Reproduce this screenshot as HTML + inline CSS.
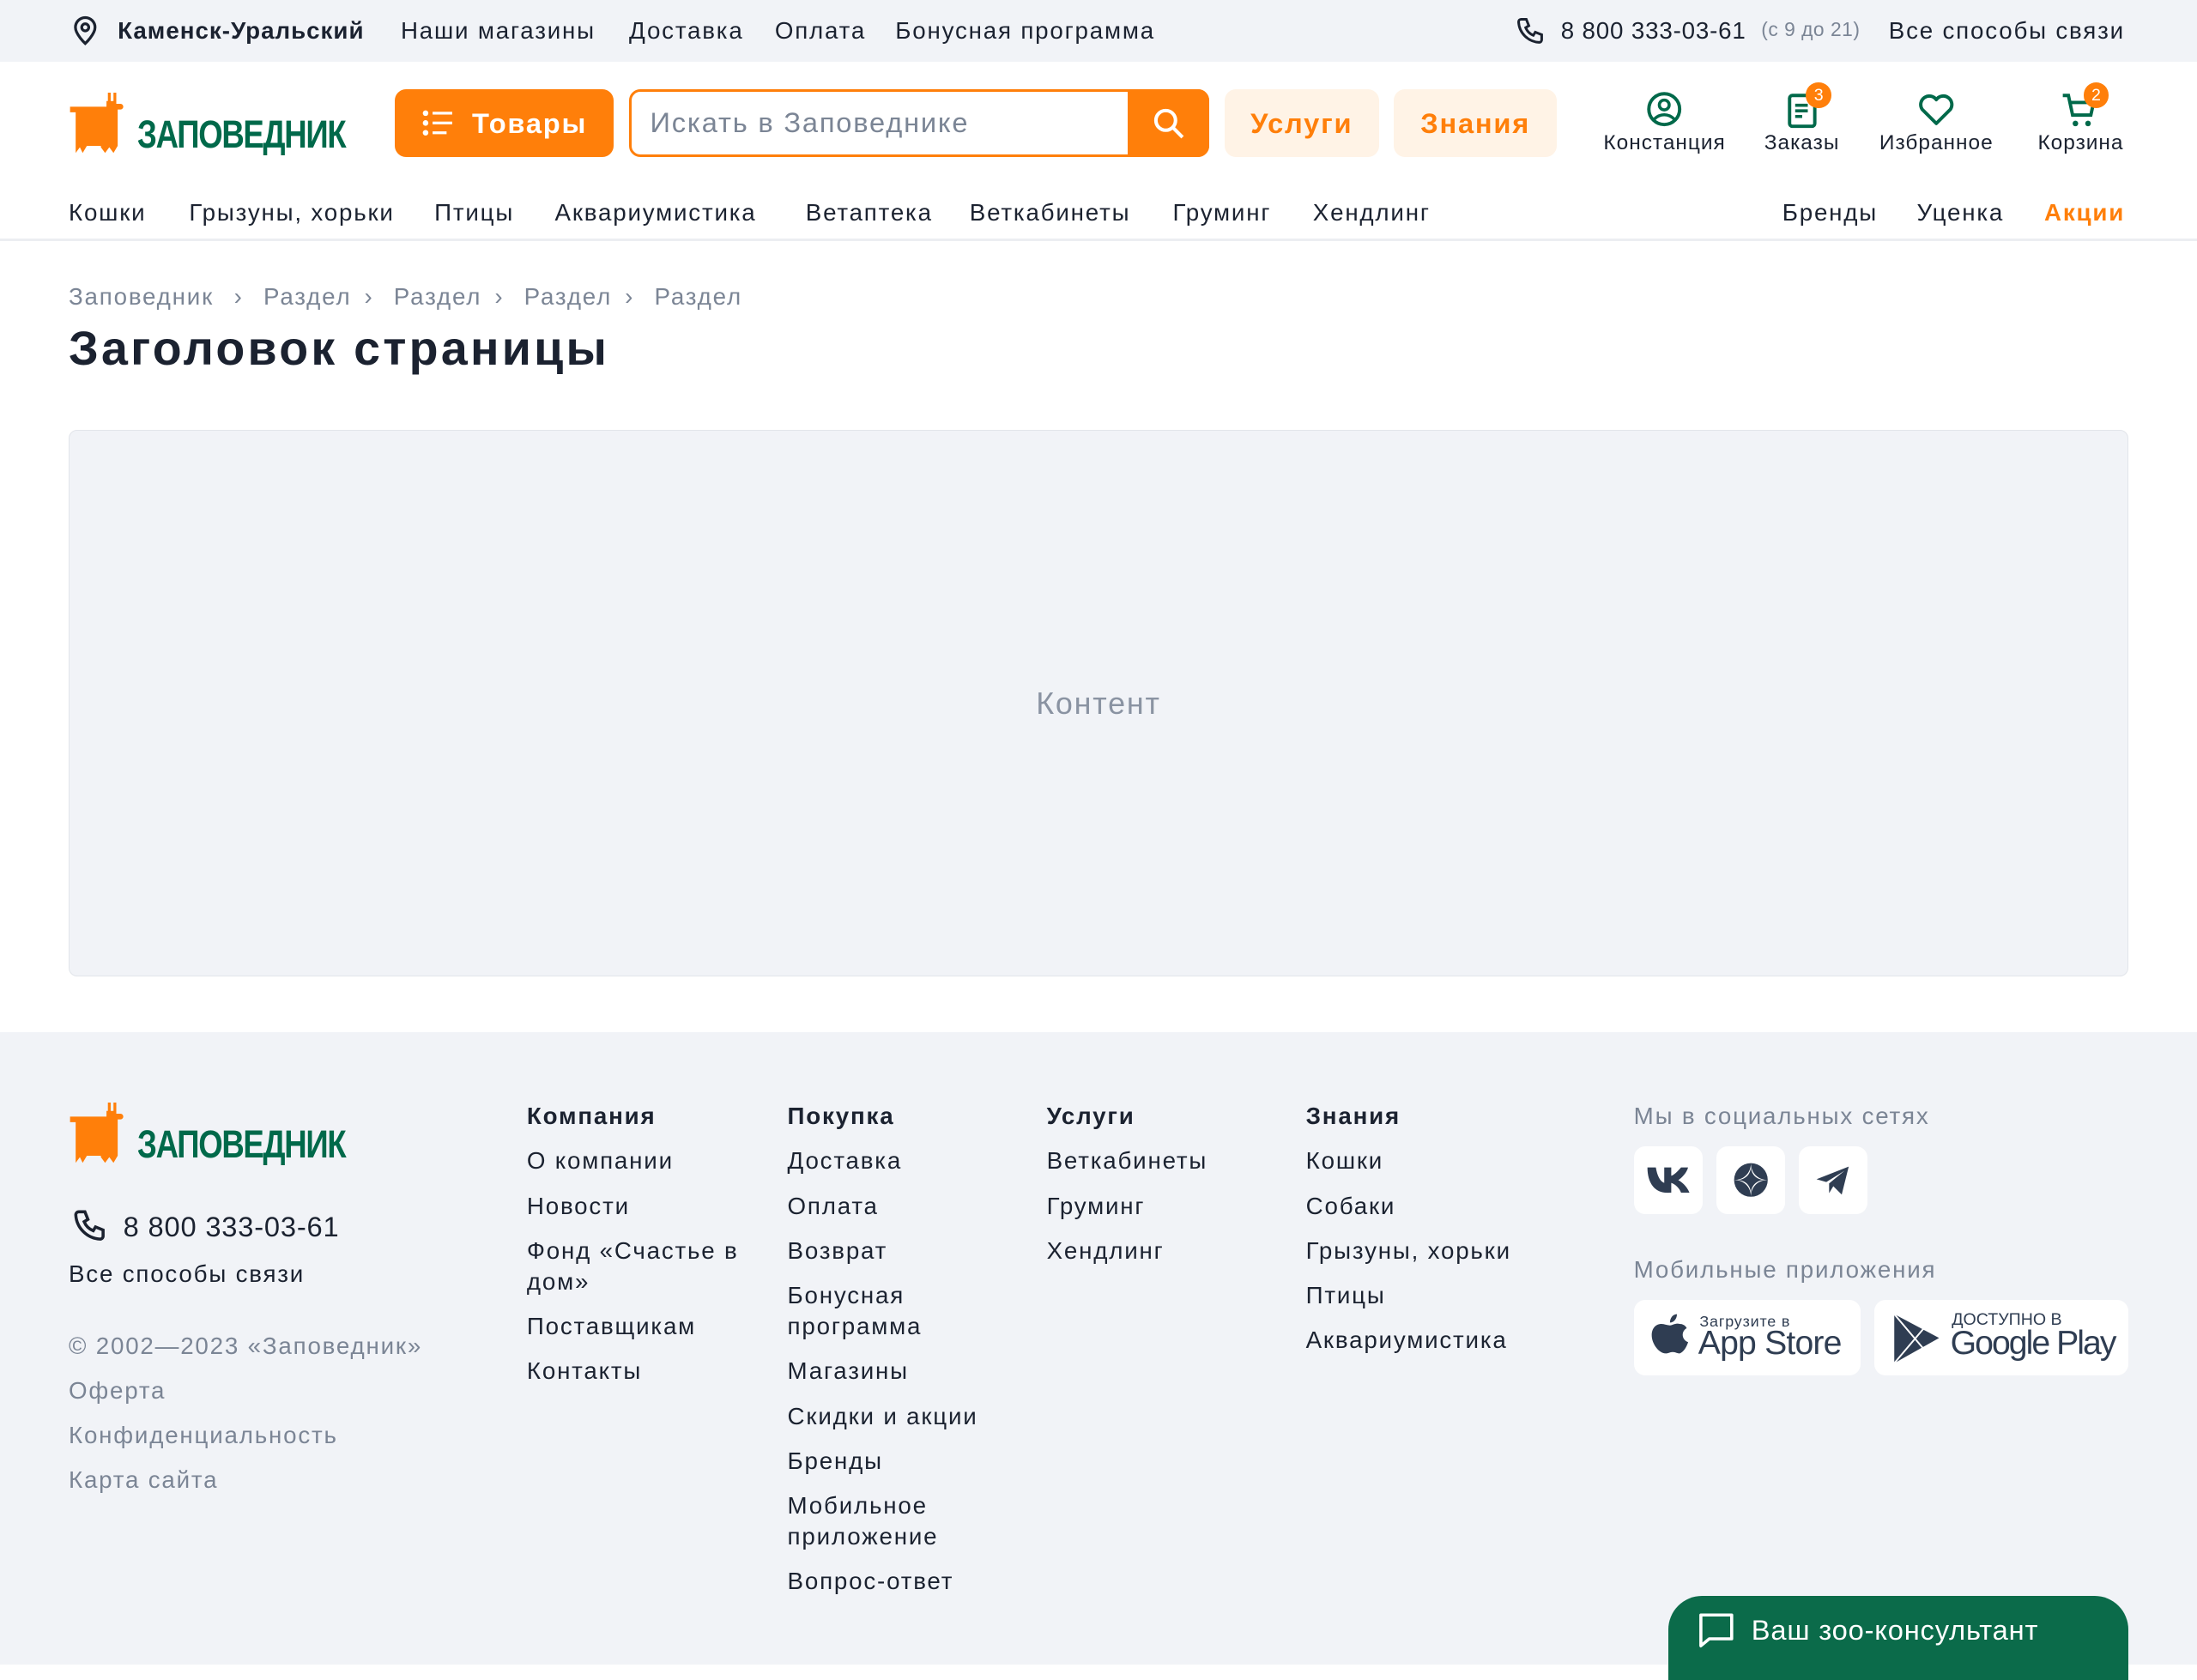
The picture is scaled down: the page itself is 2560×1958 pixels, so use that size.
<!DOCTYPE html>
<html><head><meta charset="utf-8">
<style>
html{zoom:1.63265}
*{box-sizing:border-box;margin:0;padding:0}
body{width:1568px;height:1188px;overflow:hidden;font-family:"Liberation Sans","DejaVu Sans",sans-serif;color:#1b2230;background:#fff;position:relative;font-size:17px;letter-spacing:1.1px}
.a{position:absolute;white-space:nowrap}
.top{position:absolute;left:0;top:0;width:1568px;height:44px;background:#f1f3f7}
.g{color:#7b8595}
.btn{position:absolute;border-radius:8px;display:flex;align-items:center;justify-content:center;font-weight:bold;font-size:20px}
.ic{position:absolute;text-align:center;font-size:15px;width:110px;letter-spacing:.6px}
.badge{position:absolute;width:18px;height:18px;border-radius:9px;background:#ff7f0a;color:#fff;font-size:12px;display:flex;align-items:center;justify-content:center;letter-spacing:0}
.col div{margin-bottom:10px;line-height:22px}
.col b{display:block;margin-bottom:10px;line-height:22px}
.foot{position:absolute;left:0;top:737px;width:1568px;height:451px;background:#f1f3f7}
.sq{position:absolute;top:818px;width:49px;height:49px;background:#fff;border-radius:8px;display:flex;align-items:center;justify-content:center}
.logo{position:absolute;display:flex;align-items:flex-end}
.logo span{color:#00694a;font-weight:bold;font-size:28px;letter-spacing:-1px;transform:scaleX(.8);transform-origin:left bottom;display:inline-block;margin-left:3px;line-height:28px}
</style></head><body>
<div class="top"></div>
<svg class="a" style="left:51px;top:11px" width="20" height="22" viewBox="0 0 20 22"><path d="M10 20s7-6.5 7-11.5A7 7 0 0 0 3 8.5C3 13.5 10 20 10 20z" fill="none" stroke="#1b2230" stroke-width="2"/><circle cx="10" cy="8.5" r="2.5" fill="none" stroke="#1b2230" stroke-width="2"/></svg>
<div class="a" style="left:84px;top:12px;font-weight:bold;letter-spacing:.6px">Каменск-Уральский</div>
<div class="a" style="left:286px;top:12px">Наши магазины</div>
<div class="a" style="left:449px;top:12px">Доставка</div>
<div class="a" style="left:553px;top:12px">Оплата</div>
<div class="a" style="left:639px;top:12px">Бонусная программа</div>
<svg class="a" style="left:1081px;top:11px" width="22" height="22" viewBox="0 0 24 24"><path d="M5 3h4l2 5-2.5 1.5a11 11 0 0 0 6 6L16 13l5 2v4a2 2 0 0 1-2 2A17 17 0 0 1 3 5a2 2 0 0 1 2-2" fill="none" stroke="#1b2230" stroke-width="2"/></svg>
<div class="a" style="left:1114px;top:12px;letter-spacing:.5px">8 800 333-03-61</div>
<div class="a g" style="left:1257px;top:13px;font-size:14px;letter-spacing:.3px">(с 9 до 21)</div>
<div class="a" style="left:1348px;top:12px">Все способы связи</div>

<div class="logo" style="left:49px;top:66px">
<svg width="46" height="44" viewBox="0 0 46 44"><path d="M1 10h26V6h1V0h2v6h2V0h2v8h3a2 2 0 1 1 0 4h-2v26l-3 5-3-4-3 4-3-4v-1H13l-3 5-2-4-3 4V14H1z" fill="#ff7f0a"/></svg><span>ЗАПОВЕДНИК</span></div>

<div class="btn" style="left:282px;top:64px;width:156px;height:48px;background:#ff7f0a;color:#fff">
<svg width="24" height="20" viewBox="0 0 24 20" style="margin-right:12px"><g fill="#fff"><circle cx="3" cy="3" r="2"/><circle cx="3" cy="10" r="2"/><circle cx="3" cy="17" r="2"/><rect x="8" y="2" width="14" height="2"/><rect x="8" y="9" width="14" height="2"/><rect x="8" y="16" width="10" height="2"/></g></svg>Товары</div>
<div class="a" style="left:449px;top:64px;width:414px;height:48px;border:2px solid #ff7f0a;border-radius:8px;background:#fff"></div>
<div class="a g" style="left:464px;top:76px;font-size:20px">Искать в Заповеднике</div>
<div class="a" style="left:805px;top:64px;width:58px;height:48px;background:#ff7f0a;border-radius:0 8px 8px 0"></div>
<svg class="a" style="left:822px;top:76px" width="24" height="24" viewBox="0 0 24 24"><circle cx="10" cy="10" r="7" fill="none" stroke="#fff" stroke-width="2.5"/><path d="M15 15l7 7" stroke="#fff" stroke-width="2.5"/></svg>
<div class="btn" style="left:874px;top:64px;width:110px;height:48px;background:#fff3e6;color:#ff7f0a">Услуги</div>
<div class="btn" style="left:995px;top:64px;width:116px;height:48px;background:#fff3e6;color:#ff7f0a">Знания</div>

<svg class="a" style="left:1175px;top:65px" width="26" height="26" viewBox="0 0 26 26"><circle cx="13" cy="13" r="11" fill="none" stroke="#00694a" stroke-width="2.4"/><circle cx="13" cy="10" r="3.5" fill="none" stroke="#00694a" stroke-width="2.2"/><path d="M6 20c4-4 10-4 14 0" fill="none" stroke="#00694a" stroke-width="2.2"/></svg>
<div class="ic" style="left:1133px;top:94px">Констанция</div>
<svg class="a" style="left:1275px;top:66px" width="24" height="26" viewBox="0 0 24 26"><rect x="2" y="2" width="18" height="22" rx="2" fill="none" stroke="#00694a" stroke-width="2.4"/><path d="M6 9h9M6 13h9M6 17h5" stroke="#00694a" stroke-width="2.2"/></svg>
<div class="badge" style="left:1289px;top:59px">3</div>
<div class="ic" style="left:1231px;top:94px">Заказы</div>
<svg class="a" style="left:1369px;top:66px" width="26" height="24" viewBox="0 0 26 24"><path d="M13 22L3 12a5.5 5.5 0 0 1 10-7 5.5 5.5 0 0 1 10 7z" fill="none" stroke="#00694a" stroke-width="2.4" stroke-linejoin="round"/></svg>
<div class="ic" style="left:1327px;top:94px">Избранное</div>
<svg class="a" style="left:1471px;top:66px" width="26" height="26" viewBox="0 0 26 26"><path d="M1 2h4l3 14h13l2-9H7" fill="none" stroke="#00694a" stroke-width="2.4"/><circle cx="10" cy="22" r="2" fill="#00694a"/><circle cx="19" cy="22" r="2" fill="#00694a"/></svg>
<div class="badge" style="left:1487px;top:59px">2</div>
<div class="ic" style="left:1430px;top:94px">Корзина</div>

<div class="a" style="left:49px;top:142px">Кошки</div>
<div class="a" style="left:135px;top:142px">Грызуны, хорьки</div>
<div class="a" style="left:310px;top:142px">Птицы</div>
<div class="a" style="left:396px;top:142px">Аквариумистика</div>
<div class="a" style="left:575px;top:142px">Ветаптека</div>
<div class="a" style="left:692px;top:142px">Веткабинеты</div>
<div class="a" style="left:837px;top:142px">Груминг</div>
<div class="a" style="left:937px;top:142px">Хендлинг</div>
<div class="a" style="left:1272px;top:142px">Бренды</div>
<div class="a" style="left:1368px;top:142px">Уценка</div>
<div class="a" style="left:1459px;top:142px;color:#ff7f0a;font-weight:bold">Акции</div>
<div class="a" style="left:0;top:170px;width:1568px;height:2px;background:#eceef2"></div>

<div class="a g" style="left:49px;top:202px">Заповедник</div>
<div class="a g" style="left:167px;top:202px">›</div>
<div class="a g" style="left:188px;top:202px">Раздел</div>
<div class="a g" style="left:260px;top:202px">›</div>
<div class="a g" style="left:281px;top:202px">Раздел</div>
<div class="a g" style="left:353px;top:202px">›</div>
<div class="a g" style="left:374px;top:202px">Раздел</div>
<div class="a g" style="left:446px;top:202px">›</div>
<div class="a g" style="left:467px;top:202px">Раздел</div>
<div class="a" style="left:49px;top:229px;font-size:34px;font-weight:bold;letter-spacing:2px">Заголовок страницы</div>

<div class="a" style="left:49px;top:307px;width:1470px;height:390px;background:#f1f3f7;border:1px solid #e2e5ea;border-radius:6px;display:flex;align-items:center;justify-content:center;font-size:22px;color:#8a93a2">Контент</div>

<div class="foot"></div>
<div class="logo" style="left:49px;top:787px">
<svg width="46" height="44" viewBox="0 0 46 44"><path d="M1 10h26V6h1V0h2v6h2V0h2v8h3a2 2 0 1 1 0 4h-2v26l-3 5-3-4-3 4-3-4v-1H13l-3 5-2-4-3 4V14H1z" fill="#ff7f0a"/></svg><span>ЗАПОВЕДНИК</span></div>
<svg class="a" style="left:51px;top:862px" width="26" height="26" viewBox="0 0 24 24"><path d="M5 3h4l2 5-2.5 1.5a11 11 0 0 0 6 6L16 13l5 2v4a2 2 0 0 1-2 2A17 17 0 0 1 3 5a2 2 0 0 1 2-2" fill="none" stroke="#1b2230" stroke-width="2"/></svg>
<div class="a" style="left:88px;top:864px;font-size:20px;letter-spacing:.5px">8 800 333-03-61</div>
<div class="a" style="left:49px;top:900px">Все способы связи</div>
<div class="a g" style="left:49px;top:951px">© 2002—2023 «Заповедник»</div>
<div class="a g" style="left:49px;top:983px">Оферта</div>
<div class="a g" style="left:49px;top:1015px">Конфиденциальность</div>
<div class="a g" style="left:49px;top:1047px">Карта сайта</div>

<div class="a col" style="left:376px;top:786px;white-space:normal;width:170px"><b>Компания</b><div>О компании</div><div>Новости</div><div>Фонд «Счастье в дом»</div><div>Поставщикам</div><div>Контакты</div></div>
<div class="a col" style="left:562px;top:786px;white-space:normal;width:160px"><b>Покупка</b><div>Доставка</div><div>Оплата</div><div>Возврат</div><div>Бонусная программа</div><div>Магазины</div><div>Скидки и акции</div><div>Бренды</div><div>Мобильное приложение</div><div>Вопрос-ответ</div></div>
<div class="a col" style="left:747px;top:786px;white-space:normal;width:170px"><b>Услуги</b><div>Веткабинеты</div><div>Груминг</div><div>Хендлинг</div></div>
<div class="a col" style="left:932px;top:786px;white-space:normal;width:200px"><b>Знания</b><div>Кошки</div><div>Собаки</div><div>Грызуны, хорьки</div><div>Птицы</div><div>Аквариумистика</div></div>

<div class="a g" style="left:1166px;top:787px">Мы в социальных сетях</div>
<div class="sq" style="left:1166px"><svg width="32" height="20" viewBox="0 0 32 20"><path d="M1 1h6c1 6 3 10 6 11V1h5v6c3-1 6-5 7-6h5c-1 4-5 8-7 9 2 1 6 4 8 9h-6c-1-3-4-6-7-7v7h-1C7 20 1 13 1 1z" fill="#2f3d52"/></svg></div>
<div class="sq" style="left:1225px"><svg width="26" height="26" viewBox="0 0 26 26"><circle cx="13" cy="13" r="12" fill="#2f3d52"/><path d="M13 1c0 7-5 12-12 12 7 0 12 5 12 12 0-7 5-12 12-12-7 0-12-5-12-12z" fill="#fff"/><path d="M13 3c0 6-4 10-10 10 6 0 10 4 10 10 0-6 4-10 10-10-6 0-10-4-10-10z" fill="#2f3d52"/></svg></div>
<div class="sq" style="left:1284px"><svg width="26" height="22" viewBox="0 0 26 22"><path d="M1 10L24 1l-5 20-6-6-3 5v-7l11-9-13 8z" fill="#2f3d52"/></svg></div>

<div class="a g" style="left:1166px;top:897px">Мобильные приложения</div>
<div class="a" style="left:1166px;top:928px;width:162px;height:54px;background:#fff;border-radius:8px"></div>
<svg class="a" style="left:1178px;top:937px" width="28" height="34" viewBox="0 0 28 34"><path d="M19 1c0 3-2 6-5 6 0-3 2-6 5-6zM14 9c2 0 4-2 7-1 2 0 4 1 5 3-4 2-4 8 1 10-1 3-3 7-6 8-2 0-3-1-5-1s-3 1-5 1C6 29 1 22 1 16c0-5 3-8 7-8 2 0 4 1 6 1z" fill="#2f3d52"/></svg>
<div class="a" style="left:1213px;top:937px;font-size:11px;color:#2f3d52;letter-spacing:.5px">Загрузите в</div>
<div class="a" style="left:1212px;top:946px;font-size:24px;color:#2f3d52;letter-spacing:-.5px">App Store</div>
<div class="a" style="left:1338px;top:928px;width:181px;height:54px;background:#fff;border-radius:8px"></div>
<svg class="a" style="left:1350px;top:937px" width="36" height="38" viewBox="0 0 36 38"><path d="M2 1l32 17L2 36z" fill="#2f3d52"/><path d="M2 1l22 26M2 36l22-26" stroke="#fff" stroke-width="1.2"/></svg>
<div class="a" style="left:1393px;top:935px;font-size:12px;color:#2f3d52;letter-spacing:0">ДОСТУПНО В</div>
<div class="a" style="left:1392px;top:946px;font-size:24px;color:#2f3d52;letter-spacing:-1.2px">Google Play</div>

<div class="a" style="left:1191px;top:1139px;width:328px;height:60px;background:#0b6b4a;border-radius:24px 24px 0 0;color:#fff;font-size:20px;padding:13px 0 0 59px;letter-spacing:.5px">Ваш зоо-консультант</div>
<svg class="a" style="left:1211px;top:1151px" width="28" height="26" viewBox="0 0 28 26"><path d="M3 2h22v17H9l-6 5z" fill="none" stroke="#fff" stroke-width="2.2" stroke-linejoin="round"/></svg>
</body></html>
